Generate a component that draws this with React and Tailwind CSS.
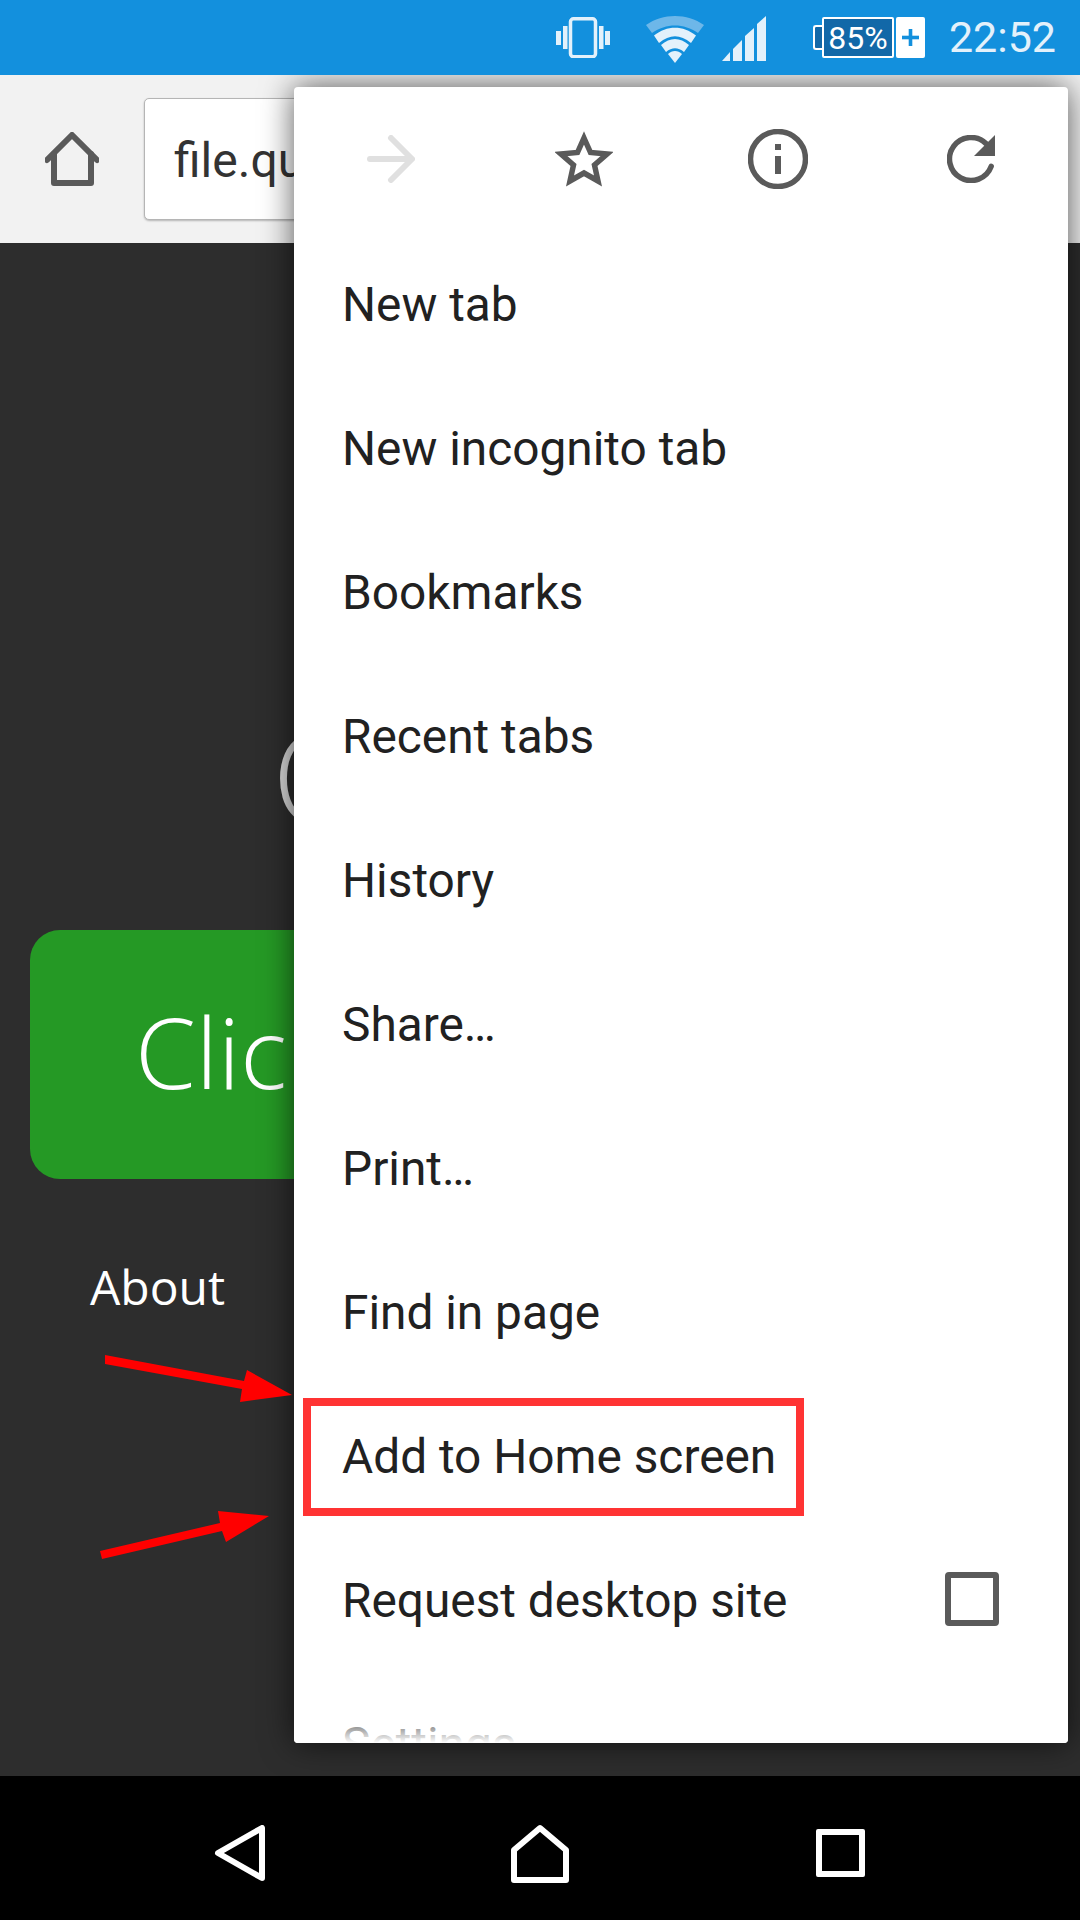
const menuItems = [
  "New tab",
  "New incognito tab",
  "Bookmarks",
  "Recent tabs",
  "History",
  "Share…",
  "Print…",
  "Find in page",
  "Add to Home screen",
  "Request desktop site",
  "Settings",
];

function VibrateIcon() {
  return (
    <svg width="54" height="41" viewBox="0 0 54 41" fill="none">
      <rect x="14.5" y="1.75" width="25" height="38" rx="3" stroke="#e3f1fb" strokeWidth="3.5" />
      <rect x="0" y="14" width="5" height="14" fill="#e3f1fb" />
      <rect x="7" y="9" width="4.5" height="23" fill="#e3f1fb" />
      <rect x="43" y="9" width="4.5" height="23" fill="#e3f1fb" />
      <rect x="49" y="14" width="5" height="14" fill="#e3f1fb" />
    </svg>
  );
}

function WifiIcon() {
  return (
    <svg width="58" height="47" viewBox="0 0 58 47">
      <path d="M0 9 C17 -3 41 -3 58 9 L52 17 C38 7 20 7 6 17 Z" fill="#6db7e9" />
      <path d="M8 19.5 C21 9 37 9 50 19.5 L45 27 C34 18 24 18 13 27 Z" fill="#e3f1fb" />
      <path d="M15 29 C24 21 34 21 43 29 L38 36 C32 31 26 31 20 36 Z" fill="#e3f1fb" />
      <path d="M22 38 C26 34 32 34 36 38 L29 47 Z" fill="#e3f1fb" />
    </svg>
  );
}

function SignalIcon() {
  return (
    <svg width="44" height="45" viewBox="0 0 44 45" fill="#e3f1fb">
      <path d="M0 45 L8 36 L8 45 Z" />
      <path d="M11 45 L11 33 L20 24 L20 45 Z" />
      <path d="M23 45 L23 20 L32 12 L32 45 Z" />
      <path d="M35 45 L35 8 L44 0 L44 45 Z" />
    </svg>
  );
}

function BatteryIcon() {
  return (
    <div className="flex items-stretch h-[41px]">
      <div className="w-[10px] flex items-center">
        <div className="w-[10px] h-[25px] bg-[#1268a8] border-2 border-r-0 border-white rounded-l-[3px]"></div>
      </div>
      <div className="w-[72px] -ml-[1px] bg-[#1268a8] border-2 border-white rounded-[2px] flex items-center justify-center text-white text-[32px] leading-none font-['Roboto',sans-serif]">
        85%
      </div>
      <div className="w-[29px] ml-[2px] bg-white rounded-[2px] flex items-center justify-center">
        <svg width="17" height="17" viewBox="0 0 17 17" fill="#1390dd">
          <rect x="6.7" y="0" width="3.6" height="17" />
          <rect x="0" y="6.7" width="17" height="3.6" />
        </svg>
      </div>
    </div>
  );
}

function StatusBar() {
  return (
    <div className="relative z-20 h-[75px] shrink-0 bg-[#1390dd] flex items-center justify-end pr-[24px]">
      <VibrateIcon />
      <div className="ml-[36px] mt-[3px]">
        <WifiIcon />
      </div>
      <div className="ml-[18px] mt-[2px]">
        <SignalIcon />
      </div>
      <div className="ml-[47px]">
        <BatteryIcon />
      </div>
      <span className="ml-[24px] text-[43px] leading-none text-[#e3f1fb] font-['Roboto',sans-serif]">22:52</span>
    </div>
  );
}

function Toolbar() {
  return (
    <div className="h-[168px] shrink-0 bg-[#f2f2f2] flex items-center pl-[45px]">
      <svg width="54" height="54" viewBox="0 0 54 54" fill="none" stroke="#5a5a5a" strokeWidth="6" strokeLinecap="round" strokeLinejoin="round">
        <path d="M2 28 L27 3 L52 28" />
        <path d="M9 22 L9 51 L46 51 L46 22" />
      </svg>
      <div className="ml-[45px] h-[122px] w-[600px] bg-white rounded-[5px] border border-[#b5b5b5] shadow-[0_1px_2px_rgba(0,0,0,0.25)] flex items-center pl-[29px] pt-[4px] text-[48px] text-[#333333] font-['Roboto',sans-serif]">
        file.quackit.com
      </div>
    </div>
  );
}

function PageContent() {
  return (
    <div className="flex-1 bg-[#2d2d2d] pl-[30px] pr-[30px] font-['Open_Sans',sans-serif]">
      <div className="h-[149px] mt-[467px] w-[266px] overflow-hidden whitespace-nowrap text-[130px] font-light leading-none text-[#d6d6d6] pl-[242px]">
        Quackit
      </div>
      <div className="mt-[71px] h-[249px] bg-[#259925] rounded-[30px] flex items-center pl-[105px] pb-[6px] text-[98px] font-light text-white">
        <div className="w-[159px] overflow-hidden whitespace-nowrap">Click here</div>
      </div>
      <div className="mt-[84px] pl-[60px] text-[48px] leading-none text-white">About</div>
    </div>
  );
}

function MenuIconRow() {
  return (
    <div className="h-[145px] pb-[2px] grid grid-cols-4 place-items-center">
      <svg width="48" height="48" viewBox="0 0 48 48" fill="none" stroke="#e0e0e0" strokeWidth="6" strokeLinecap="round" strokeLinejoin="round">
        <path d="M3 24 L44 24" />
        <path d="M24 3 L45 24 L24 45" />
      </svg>
      <svg width="58" height="56" viewBox="0 0 58 56" fill="none" stroke="#5a5a5a" strokeWidth="5.5">
        <path d="M29 7 L35.5 21.5 L52 23 L39.5 34 L43 50 L29 42 L15 50 L18.5 34 L6 23 L22.5 21.5 Z" />
      </svg>
      <svg width="60" height="60" viewBox="0 0 60 60" fill="none">
        <circle cx="30" cy="30" r="27.5" stroke="#5a5a5a" strokeWidth="5.5" />
        <rect x="27" y="15" width="6" height="6" fill="#5a5a5a" />
        <rect x="27" y="27" width="6" height="18" fill="#5a5a5a" />
      </svg>
      <svg width="48" height="48" viewBox="0 0 48 48" fill="none">
        <path d="M44.2 31.4 A21.5 21.5 0 1 1 39.2 8.8" stroke="#5a5a5a" strokeWidth="5.5" strokeLinecap="round" />
        <path d="M48 0 L48 21 L27 21 Z" fill="#5a5a5a" />
      </svg>
    </div>
  );
}

function Menu() {
  return (
    <div className="absolute left-[294px] top-[87px] w-[774px] h-[1656px] bg-white rounded-[4px] overflow-hidden shadow-[0_0_32px_rgba(0,0,0,0.65)] z-10">
      <MenuIconRow />
      {menuItems.map((item) => (
        <div key={item} className="h-[144px] pl-[48px] pr-[69px] pt-[4px] flex items-center justify-between text-[47.8px] text-[#212121] font-['Roboto',sans-serif]">
          <span>{item}</span>
          {item === "Request desktop site" && (
            <div className="w-[54px] h-[54px] -mt-[7px] border-[6px] border-[#5a5a5a] rounded-[4px]"></div>
          )}
        </div>
      ))}
      <div className="absolute left-0 right-0 bottom-0 h-[24px] bg-gradient-to-b from-white/30 to-white"></div>
      {/* red highlight drawn over the screenshot */}
      <div className="absolute left-[9px] top-[1311px] w-[501px] h-[118px] border-[8px] border-[#ff3333]"></div>
    </div>
  );
}

function Annotations() {
  return (
    <svg className="absolute left-0 top-[1340px] z-10" width="300" height="240" viewBox="0 1340 300 240" fill="#ff0000">
      <path d="M105 1355 L244 1381 L247 1370 L292 1395 L240 1402 L242 1389 L105 1364 Z" />
      <path d="M100 1551 L220 1523 L218 1511 L269 1516 L226 1542 L222 1531 L102 1559 Z" />
    </svg>
  );
}

function NavBar() {
  return (
    <div className="relative z-20 h-[144px] shrink-0 bg-black flex items-center pl-[214px] pt-[9px]">
      <svg width="52" height="56" viewBox="0 0 52 56" fill="none" stroke="#ffffff" strokeWidth="6" strokeLinejoin="round">
        <path d="M4 28 L48 3 L48 53 Z" />
      </svg>
      <svg className="ml-[245px]" width="58" height="60" viewBox="0 0 58 60" fill="none" stroke="#ffffff" strokeWidth="6" strokeLinejoin="round">
        <path d="M29 5 L55 27 L55 57 L3 57 L3 27 Z" />
      </svg>
      <div className="ml-[247px] w-[49px] h-[48px] border-[6px] border-white rounded-[2px]"></div>
    </div>
  );
}

export default function App() {
  return (
    <div className="relative w-[1080px] h-[1920px] overflow-hidden flex flex-col">
      <StatusBar />
      <Toolbar />
      <PageContent />
      <NavBar />
      <Menu />
      <Annotations />
    </div>
  );
}
